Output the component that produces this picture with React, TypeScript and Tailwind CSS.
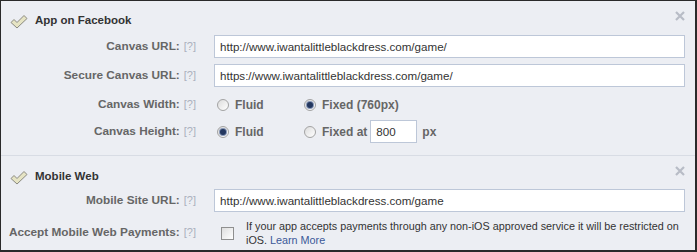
import React from 'react';

const font = { fontFamily: '"Liberation Sans", Arial, sans-serif' };

function CheckIcon() {
  return (
    <svg width="18" height="15" viewBox="0 0 18 15" className="shrink-0">
      <path
        d="M1 8.5 L4 5.5 L7 8.5 L14 1.5 L17 4.5 L7 14 Z"
        fill="#e6e4c4"
        stroke="#8a8a80"
        strokeWidth="1"
        strokeLinejoin="round"
      />
    </svg>
  );
}

function CloseIcon() {
  return (
    <svg width="10" height="10" viewBox="0 0 10 10" className="absolute right-[10px] top-[10px]">
      <path d="M1 1 L9 9 M9 1 L1 9" stroke="#b8bcc6" strokeWidth="2.2" />
    </svg>
  );
}

function Help() {
  return <span className="ml-[4px] text-[11px] font-normal text-[#abb1bd]">[?]</span>;
}

function Label({ children }: { children: React.ReactNode }) {
  return (
    <div className="w-[200px] shrink-0 pr-[5px] text-right text-[11.8px] font-bold text-[#666]">
      {children}
      <Help />
    </div>
  );
}

function TextInput({ value, className = 'w-[471px]' }: { value: string; className?: string }) {
  return (
    <div
      className={`${className} flex h-[23px] items-center border border-[#bdc7d8] bg-white px-[5px] text-[11.6px] font-normal text-[#333]`}
    >
      {value}
    </div>
  );
}

function Radio({ checked }: { checked?: boolean }) {
  return (
    <span className="flex h-[12px] w-[12px] shrink-0 items-center justify-center rounded-full border border-[#a3a3a3] bg-gradient-to-br from-[#dcdcdc] to-white">
      {checked && <span className="h-[6px] w-[6px] rounded-full bg-[#23375f] ring-1 ring-[#8595b5]" />}
    </span>
  );
}

function Option({ checked, children, className = '' }: { checked?: boolean; children: React.ReactNode; className?: string }) {
  return (
    <div className={`flex items-center gap-[6px] text-[12px] font-bold text-[#666] ${className}`}>
      <Radio checked={checked} />
      {children}
    </div>
  );
}

function Header({ title }: { title: string }) {
  return (
    <div className="flex h-[18px] items-center pl-[9px]">
      <CheckIcon />
      <span className="ml-[7px] text-[11.5px] font-bold text-[#333]">{title}</span>
    </div>
  );
}

export default function App() {
  return (
    <div
      style={font}
      className="h-[252px] w-[697px] overflow-hidden border-t border-l border-r-2 border-b-2 border-[#2a2a2a] bg-[#eceef3]"
    >
      <section className="relative border-b border-[#d8dce4] pt-[11px] pb-[12px]">
        <CloseIcon />
        <Header title="App on Facebook" />
        <div className="mt-[5px] flex flex-col">
          <div className="flex items-center">
            <Label>Canvas URL:</Label>
            <div className="ml-[13px]">
              <TextInput value="http://www.iwantalittleblackdress.com/game/" />
            </div>
          </div>
          <div className="mt-[6px] flex items-center">
            <Label>Secure Canvas URL:</Label>
            <div className="ml-[13px]">
              <TextInput value="https://www.iwantalittleblackdress.com/game/" />
            </div>
          </div>
          <div className="mt-[8px] flex h-[20px] items-center">
            <Label>Canvas Width:</Label>
            <div className="ml-[16px] flex items-center">
              <Option className="w-[87px]">Fluid</Option>
              <Option checked>Fixed (760px)</Option>
            </div>
          </div>
          <div className="mt-[5px] flex h-[23px] items-center">
            <Label>Canvas Height:</Label>
            <div className="ml-[16px] flex items-center">
              <Option checked className="w-[87px]">
                Fluid
              </Option>
              <Option>
                Fixed at
                <TextInput value="800" className="ml-[-3px] w-[47px]" />
                <span className="ml-[-1px]">px</span>
              </Option>
            </div>
          </div>
        </div>
      </section>
      <section className="relative pt-[12px]">
        <CloseIcon />
        <Header title="Mobile Web" />
        <div className="mt-[3px] flex items-center">
          <Label>Mobile Site URL:</Label>
          <div className="ml-[13px]">
            <TextInput value="http://www.iwantalittleblackdress.com/game" />
          </div>
        </div>
        <div className="mt-[7px] flex items-center">
          <Label>Accept Mobile Web Payments:</Label>
          <span className="ml-[20px] h-[13px] w-[13px] shrink-0 border border-[#8f8f8f] bg-gradient-to-br from-[#dedede] to-white" />
          <p className="ml-[12px] text-[10.8px] leading-[14px] text-[#333]">
            If your app accepts payments through any non-iOS approved service it will be restricted on
            <br />
            iOS. <span className="text-[#3b5998]">Learn More</span>
          </p>
        </div>
      </section>
    </div>
  );
}
